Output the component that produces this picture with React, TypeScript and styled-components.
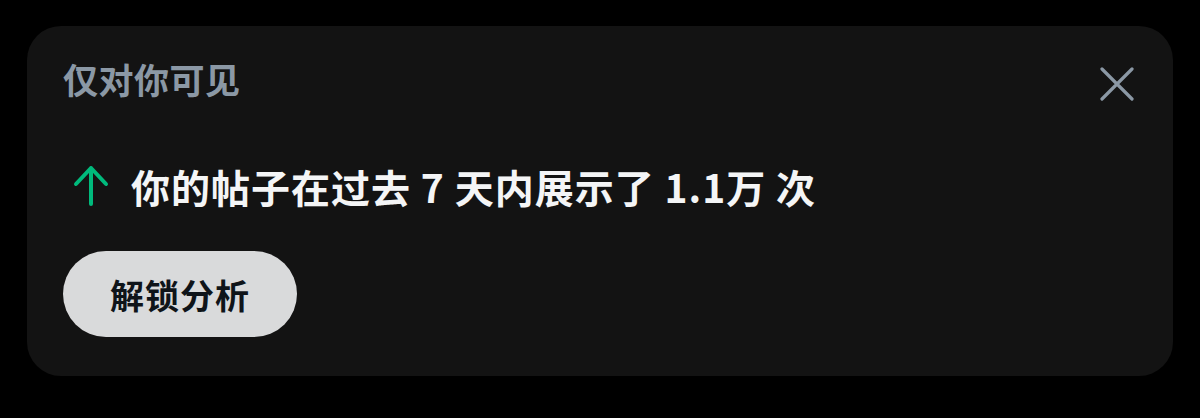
import styled, { createGlobalStyle } from 'styled-components';

const GlobalStyle = createGlobalStyle`
  html, body {
    margin: 0;
    padding: 0;
    background: #000;
  }
  body {
    font-family: "Noto Sans CJK SC", "Noto Sans", sans-serif;
    width: 1200px;
    height: 418px;
    overflow: hidden;
  }
`;

const Page = styled.div`
  padding: 26px 27px 0 27px;
`;

const Card = styled.div`
  background: #131313;
  border-radius: 34px;
  height: 350px;
  box-sizing: border-box;
  padding: 35px 36px 38px 36px;
  display: flex;
  flex-direction: column;
`;

const Header = styled.div`
  display: flex;
  justify-content: space-between;
  align-items: flex-start;
`;

const Title = styled.div`
  font-size: 35px;
  line-height: 36px;
  font-weight: 600;
  color: #8b98a5;
  letter-spacing: 0.5px;
`;

const CloseButton = styled.button`
  background: none;
  border: none;
  padding: 0;
  margin: 6px 3px 0 0;
  width: 34px;
  height: 34px;
  display: flex;
  align-items: center;
  justify-content: center;
  cursor: pointer;
`;

const Message = styled.div`
  margin-top: 64px;
  display: flex;
  align-items: center;
  gap: 22px;
  padding-left: 10px;
`;

const MessageText = styled.div`
  font-size: 39px;
  line-height: 40px;
  font-weight: 700;
  color: #f4f5f6;
  letter-spacing: 1px;
`;

const UnlockButton = styled.button`
  margin-top: 44px;
  align-self: flex-start;
  width: 234px;
  height: 86px;
  border: none;
  border-radius: 43px;
  background: #d9dadb;
  color: #0f1419;
  font-family: inherit;
  font-size: 34px;
  font-weight: 700;
  letter-spacing: 1px;
  cursor: pointer;
`;

function ArrowUpIcon() {
  return (
    <svg width="36" height="42" viewBox="0 0 36 42" fill="none">
      <path
        d="M18 3 V39 M3 19 L18 3 L33 19"
        stroke="#00ba7c"
        strokeWidth="4"
        strokeLinecap="round"
        strokeLinejoin="round"
      />
    </svg>
  );
}

function CloseIcon() {
  return (
    <svg width="34" height="34" viewBox="0 0 34 34" fill="none">
      <path
        d="M2 2 L32 32 M32 2 L2 32"
        stroke="#8b98a5"
        strokeWidth="3.2"
        strokeLinecap="round"
      />
    </svg>
  );
}

export default function App() {
  return (
    <>
      <GlobalStyle />
      <Page>
        <Card>
          <Header>
            <Title>仅对你可见</Title>
            <CloseButton aria-label="关闭">
              <CloseIcon />
            </CloseButton>
          </Header>
          <Message>
            <ArrowUpIcon />
            <MessageText>你的帖子在过去 7 天内展示了 1.1万 次</MessageText>
          </Message>
          <UnlockButton>解锁分析</UnlockButton>
        </Card>
      </Page>
    </>
  );
}
